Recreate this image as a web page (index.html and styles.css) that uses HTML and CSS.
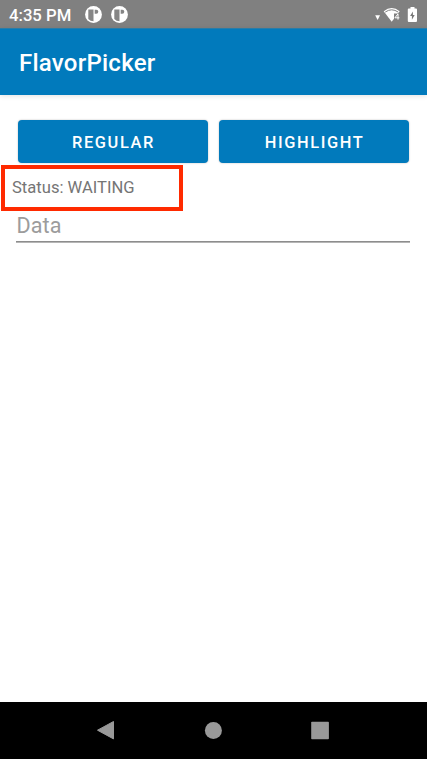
FILE: index.html
```html
<!DOCTYPE html>
<html lang="en">
<head>
<meta charset="utf-8">
<title>FlavorPicker</title>
<link rel="stylesheet" href="styles.css">
</head>
<body>
<div class="screen">
  <div class="status-bar">
    <span class="clock">4:35 PM</span>
    <svg class="notice" viewBox="0 0 17 17"><circle cx="8.5" cy="8.5" r="8.4" fill="#fff"/><path d="M3.300 3.500h5.200v11.700q-3.200 0-5.200-2.200z" fill="#858585"/><path d="M9.700 3.700h1.600a2 2 0 0 1 0 4H9.700z" fill="#858585"/></svg>
    <svg class="notice" viewBox="0 0 17 17"><circle cx="8.5" cy="8.5" r="8.4" fill="#fff"/><path d="M3.300 3.500h5.200v11.700q-3.200 0-5.200-2.200z" fill="#858585"/><path d="M9.700 3.700h1.600a2 2 0 0 1 0 4H9.700z" fill="#858585"/></svg>
    <svg class="system" viewBox="0 0 46 20"><path d="M1.200 10.300h4.800L3.600 15z" fill="#fff"/><path d="M9.700 6.200Q17.700-.4 25.700 6.200L17.700 16.800z" fill="#fff"/><path d="M11.200 7.100q6.500-4.600 13 0" fill="none" stroke="#808080" stroke-width="1"/><path d="M20 8.500h6v7h-6z" fill="#808080"/><path d="M24 14.600V8.900L20.900 12.800h4.500" fill="none" stroke="#fff" stroke-width="1"/><path d="M36.500 2h4v1.500H42q1 0 1 1V16q0 1-1 1h-7.200q-1 0-1-1V4.500q0-1 1-1h1.700z" fill="#fff"/><path d="M38.900 6.500l-2.800 4.500h1.800v3.800l2.800-4.800h-1.800z" fill="#777"/></svg>
  </div>
  <header class="app-bar">FlavorPicker</header>
  <main class="content">
    <div class="buttons">
      <button class="button">REGULAR</button>
      <button class="button">HIGHLIGHT</button>
    </div>
    <div class="status">Status: WAITING</div>
    <input class="data" type="text" placeholder="Data" aria-label="Data">
    <div class="data-line"></div>
  </main>
  <nav class="nav-bar">
    <svg class="nav-icon" viewBox="0 0 20 20"><path d="M17.500 1.500v17.400L1.500 10.200z" fill="#999" stroke="#999" stroke-linejoin="round"/></svg>
    <svg class="nav-icon" viewBox="0 0 20 20"><circle cx="10.400" cy="10.500" r="8.500" fill="#999"/></svg>
    <svg class="nav-icon" viewBox="0 0 20 20"><rect x="1.200" y="1.800" width="17.700" height="17.500" rx=".8" fill="#999"/></svg>
  </nav>
</div>
</body>
</html>
```
FILE: styles.css
```css
* { box-sizing: border-box; }

body {
  margin: 0;
  background: #fff;
  font-family: Roboto, "Liberation Sans", sans-serif;
}

.screen {
  display: flex;
  flex-direction: column;
  height: 759px;
  width: 427px;
  overflow: hidden;
}

.status-bar {
  display: flex;
  align-items: center;
  height: 28px;
  padding: 1px 7px 0 9px;
  background: #808080;
  color: #fff;
}

.clock {
  width: 76px;
  padding-top: 2px;
  font-size: 16.7px;
  font-weight: 500;
  line-height: 24px;
  white-space: nowrap;
}

.notice {
  width: 17px;
  height: 17px;
  margin-right: 9px;
}

.system {
  width: 46px;
  height: 20px;
  margin-left: auto;
}

.app-bar {
  height: 67px;
  padding: 1px 19px 0;
  border-top: 1px solid #287ca8;
  background: #017abc;
  box-shadow: 0 1px 5px rgba(0, 0, 0, .12);
  color: #fff;
  font-size: 24px;
  font-weight: 500;
  letter-spacing: .25px;
  line-height: 67px;
}

.content {
  display: flex;
  flex: 1;
  flex-direction: column;
  align-items: flex-start;
  padding-top: 25px;
}

.buttons {
  display: grid;
  grid-template-columns: 190px 190px;
  gap: 11px;
  padding-left: 18px;
}

.button {
  height: 42.5px;
  padding: 3px 0 0 1px;
  border: 0;
  border-radius: 4px;
  background: #017abc;
  box-shadow: 0 0 2px rgba(0, 0, 0, .28);
  color: #fff;
  font: 500 16.4px/40px Roboto, sans-serif;
  letter-spacing: 1.6px;
}

.status {
  width: 182px;
  height: 46px;
  margin: 2.500px 0 0 1px;
  padding-left: 7px;
  border: 4px solid #ff2a00;
  color: #757575;
  font-size: 16.6px;
  line-height: 38px;
}

.data {
  width: 394px;
  height: 30px;
  margin-left: 16.5px;
  padding: 0;
  border: 0;
  background: transparent;
  color: #222;
  font: 21.6px/30px Roboto, sans-serif;
  letter-spacing: .1px;
}

.data::placeholder { color: #9c9c9c; opacity: 1; }

.data-line {
  width: 394px;
  height: 2px;
  margin-left: 16.4px;
  border-top: 1px solid #8d8d8d;
  border-bottom: 1px solid #b5b5b5;
}

.nav-bar {
  display: flex;
  gap: 87px;
  height: 57px;
  padding: 18px 0 0 96px;
  background: #000;
}

.nav-icon {
  width: 20px;
  height: 20px;
}
```
